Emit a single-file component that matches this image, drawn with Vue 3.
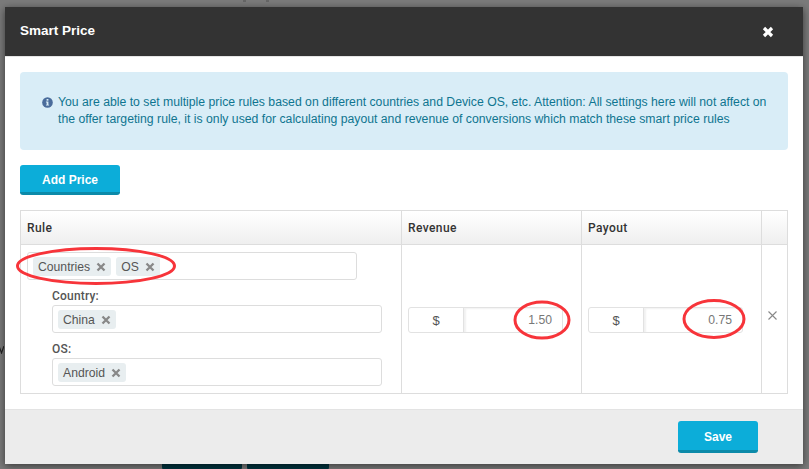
<template>
  <div class="backdrop">
    <svg class="behind-text" width="5" height="8" viewBox="0 0 5 8"><path d="M0 0l2.5 7L5 0" fill="none" stroke="#222" stroke-width="1.2" /></svg>
    <span class="behind-top"><b></b><b></b></span>
    <div class="modal">
      <header class="modal-header">
        <h4>Smart Price</h4>
        <svg class="close" viewBox="0 0 12 12" width="12" height="12"><path d="M2 2l8 8M10 2l-8 8" stroke="#fff" stroke-width="3.2" /></svg>
      </header>
      <div class="modal-body">
        <div class="alert">
          <svg class="info" viewBox="0 0 12 12" width="11" height="11">
            <circle cx="6" cy="6" r="5.8" fill="#4a6c9b" />
            <rect x="5" y="2.2" width="2" height="1.8" fill="#d9edf7" />
            <path d="M4.3 5h2.7v3.4h.8v1H4.3v-1h.8V6h-.8z" fill="#d9edf7" />
          </svg>
          <p>You are able to set multiple price rules based on different countries and Device OS, etc. Attention: All settings here will not affect on the offer targeting rule, it is only used for calculating payout and revenue of conversions which match these smart price rules</p>
        </div>
        <button class="btn add">Add Price</button>
        <div class="table">
          <div class="th rule-col">Rule</div>
          <div class="th">Revenue</div>
          <div class="th">Payout</div>
          <div class="th"></div>
          <div class="td rule-cell">
            <div class="select">
              <span v-for="t in ['Countries', 'OS']" :key="t" class="tag">{{ t }}<svg viewBox="0 0 10 10" width="10" height="10"><path d="M1.5 1.5l7 7M8.5 1.5l-7 7" stroke="#888" stroke-width="2.3" /></svg></span>
            </div>
            <div class="sub">
              <label>Country:</label>
              <div class="select"><span class="tag">China<svg viewBox="0 0 10 10" width="10" height="10"><path d="M1.5 1.5l7 7M8.5 1.5l-7 7" stroke="#888" stroke-width="2.3" /></svg></span></div>
              <label>OS:</label>
              <div class="select"><span class="tag">Android<svg viewBox="0 0 10 10" width="10" height="10"><path d="M1.5 1.5l7 7M8.5 1.5l-7 7" stroke="#888" stroke-width="2.3" /></svg></span></div>
            </div>
          </div>
          <div v-for="v in ['1.50', '0.75']" :key="v" class="td money-cell">
            <div class="money">
              <span class="cur">$</span>
              <span class="val">{{ v }}</span>
            </div>
          </div>
          <div class="td x-cell">
            <svg viewBox="0 0 9 9" width="9" height="9"><path d="M.5.5l8 8M8.5.5l-8 8" stroke="#888" stroke-width="1.1" fill="none" /></svg>
          </div>
        </div>
      </div>
      <footer class="modal-footer">
        <button class="btn save">Save</button>
      </footer>
      <svg class="marks" width="798" height="457" viewBox="0 0 798 457">
        <g fill="none" stroke="#f7343a" stroke-width="3">
          <ellipse cx="91" cy="259" rx="78.5" ry="17.5" />
          <ellipse cx="537" cy="313" rx="27" ry="18" />
          <ellipse cx="709" cy="312" rx="30" ry="18.5" />
        </g>
      </svg>
    </div>
    <div class="under">
      <span></span><span class="wide"></span>
    </div>
  </div>
</template>

<script setup>
</script>

<style>
html, body { margin: 0; overflow: hidden; }
</style>

<style scoped>
.backdrop {
  width: 809px;
  height: 469px;
  background: #7b7b7b;
  position: relative;
  overflow: hidden;
  padding: 7px 6px 0 5px;
  box-sizing: border-box;
  font-family: "Liberation Sans", Arial, sans-serif;
  font-size: 12px;
  color: #555;
}
.behind-text { position: absolute; left: -1px; top: 346px; }
.behind-top { position: absolute; left: 243px; top: 0; display: flex; gap: 20px; }
.behind-top b { width: 3px; height: 2px; background: #666; }
.under { position: absolute; left: 162px; top: 464px; display: flex; gap: 5px; }
.under span { width: 80px; height: 6px; background: #00343f; border-radius: 0 0 3px 3px; }
.under .wide { width: 82px; }
.modal {
  position: relative;
  z-index: 1;
  width: 798px;
  height: 457px;
  display: flex;
  flex-direction: column;
  background: #fff;
  box-shadow: 0 2px 8px rgba(0, 0, 0, 0.55);
}
.modal-header {
  height: 49px;
  flex: none;
  background: #333;
  border-bottom: 1px solid #e5e5e5;
  display: flex;
  align-items: center;
  justify-content: space-between;
  padding: 0 29px 0 15px;
}
.modal-header h4 { margin: 0 0 3px; color: #fff; font-size: 13.5px; font-weight: 700; }
.close { display: block; margin-top: 1px; }
.modal-body { flex: 1; padding: 15px 15px 0; }
.alert {
  height: 78px;
  box-sizing: border-box;
  background: #d9edf7;
  border-radius: 4px;
  padding: 22px 16px 0 22px;
  display: flex;
  gap: 5px;
  color: #0f7590;
}
.info { flex: none; margin-top: 3px; }
.alert p { margin: 0; line-height: 17px; font-size: 12.24px; }
.btn {
  display: block;
  border: 0;
  border-bottom: 3px solid #0c8aa9;
  border-radius: 3px;
  background: #0cadd9;
  color: #fff;
  font: 700 12px "Liberation Sans", Arial, sans-serif;
  padding: 2px 0 0;
}
.add { width: 100px; height: 30px; margin-top: 15px; }
.table {
  margin-top: 15px;
  display: grid;
  grid-template-columns: 380px 180px 180px 26px;
  grid-template-rows: 34px 148px;
  border: 1px solid #ddd;
  height: 184px;
  box-sizing: border-box;
}
.th, .td { border-left: 1px solid #ddd; box-sizing: border-box; }
.th {
  border-bottom: 1px solid #ddd;
  background: linear-gradient(#fff, #efefef);
  color: #333;
  font: 500 12px Roboto, "Liberation Sans", sans-serif;
  letter-spacing: 0.4px;
  display: flex;
  align-items: center;
  padding-left: 6px;
}
.rule-col, .rule-cell { border-left: 0; }
.rule-cell { padding: 7px 0 0 6px; }
.select {
  width: 330px;
  height: 28px;
  box-sizing: border-box;
  border: 1px solid #ddd;
  border-radius: 3px;
  background: #fff;
  padding: 4px 5px;
  display: flex;
  gap: 5px;
  align-items: flex-start;
}
.sub { margin-left: 25px; color: #555; }
.sub label { display: block; font: 500 12px/14px Roboto, "Liberation Sans", sans-serif; margin: 9px 0 2px; letter-spacing: 0.2px; }
.tag {
  height: 19px;
  background: #e8eef0;
  border-radius: 3px;
  padding: 0 5px;
  color: #555;
  font-size: 12.2px;
  line-height: 20px;
  display: inline-flex;
  gap: 6px;
  align-items: center;
}
.money-cell { display: flex; align-items: center; padding: 0 0 0 6px; }
.money {
  width: 155px;
  height: 26px;
  margin-top: 2px;
  box-sizing: border-box;
  border: 1px solid #e2e2e2;
  border-radius: 3px;
  display: flex;
}
.cur { width: 55px; flex: none; box-sizing: border-box; text-align: center; line-height: 25px; border-right: 1px solid #e2e2e2; font-size: 13px; }
.val { flex: 1; text-align: right; padding-right: 10px; line-height: 25px; color: #777; box-shadow: inset 2px 1px 2px rgba(0,0,0,0.06); font-size: 12.2px; }
.x-cell { display: flex; justify-content: center; padding: 66px 5px 0 0; }
.modal-footer {
  height: 55px;
  flex: none;
  box-sizing: border-box;
  background: #ececec;
  border-top: 1px solid #e3e3e3;
  display: flex;
  justify-content: flex-end;
  align-items: flex-start;
  padding: 11px 45px 0 0;
}
.save { width: 80px; height: 32px; padding-top: 3px; }
.marks { position: absolute; left: 0; top: 0; pointer-events: none; }
</style>
